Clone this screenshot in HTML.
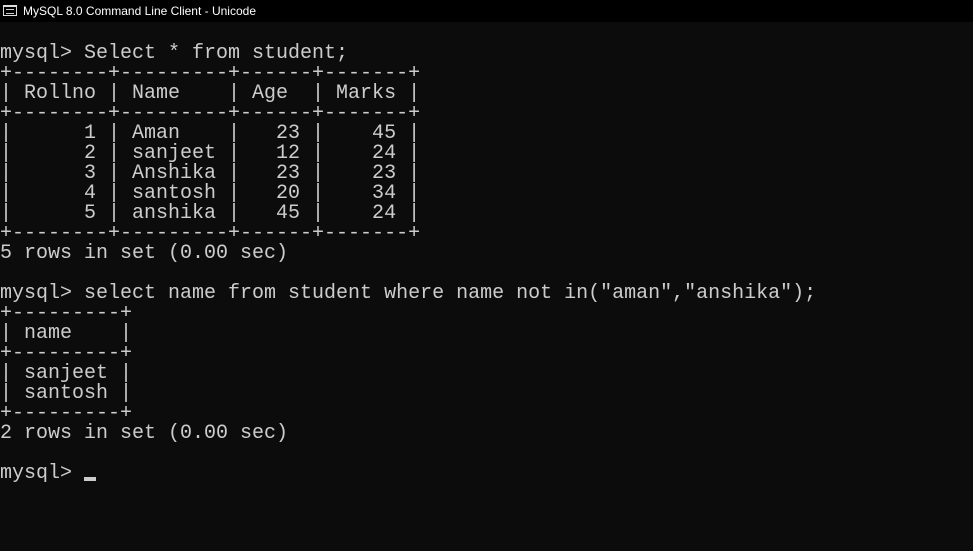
<!DOCTYPE html>
<html><head><style>
body{margin:0;width:973px;height:551px;background:#0c0c0c;overflow:hidden}
.t{height:22px;background:#000;position:relative;font-family:"Liberation Sans",sans-serif;font-size:12px;color:#fff}
.t span{position:absolute;left:23px;top:4px}
.ic{position:absolute;left:3px;top:5px;width:14px;height:11px;background:#000;border:1px solid #ddd;border-top-width:2px;box-sizing:border-box}
.ic:after{content:"";position:absolute;left:2px;top:2px;width:8px;height:3px;border-top:1px solid #ccc;border-bottom:1px solid #ccc}
pre{margin:0;padding:22px 0 0 0;font-family:"Liberation Mono",monospace;font-size:20px;line-height:20px;color:#cccccc;letter-spacing:0}
.c{display:inline-block;width:12px;height:4px;background:#ccc;vertical-align:-3px}
</style></head><body>
<div class="t"><div class="ic"></div><span>MySQL 8.0 Command Line Client - Unicode</span></div>
<pre>mysql&gt; Select * from student;
+--------+---------+------+-------+
| Rollno | Name    | Age  | Marks |
+--------+---------+------+-------+
|      1 | Aman    |   23 |    45 |
|      2 | sanjeet |   12 |    24 |
|      3 | Anshika |   23 |    23 |
|      4 | santosh |   20 |    34 |
|      5 | anshika |   45 |    24 |
+--------+---------+------+-------+
5 rows in set (0.00 sec)

mysql&gt; select name from student where name not in("aman","anshika");
+---------+
| name    |
+---------+
| sanjeet |
| santosh |
+---------+
2 rows in set (0.00 sec)

mysql&gt; <span class="c"></span></pre>
</body></html>
